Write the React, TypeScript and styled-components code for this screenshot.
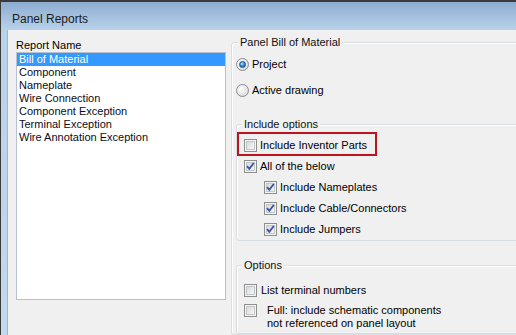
import styled, { createGlobalStyle } from 'styled-components'

const GlobalStyle = createGlobalStyle`
  html, body {
    margin: 0;
    padding: 0;
    width: 516px;
    height: 335px;
    overflow: hidden;
    background: #f0f0f0;
  }
  body {
    font-family: "Liberation Sans", Arial, sans-serif;
    font-size: 11px;
    color: #000;
  }
`

const Window = styled.div`
  width: 516px;
  height: 335px;
  box-sizing: border-box;
  display: flex;
  flex-direction: column;
  border-top: 2px solid #3a3a3a;
  border-left: 1px solid #3a3a3a;
  background: linear-gradient(to bottom, #8dadd0 0px, #b8d2ea 28px, #c2d9ef 100%);
  overflow: hidden;
`

const TitleBar = styled.div`
  height: 28px;
  box-sizing: border-box;
  padding: 6px 0 0 11px;
  display: flex;
  align-items: center;
  font-size: 12px;
  color: #1b1b1b;
`

const Client = styled.div`
  flex: 1;
  display: flex;
  margin-left: 6px;
  border-left: 1px solid #9fb6cf;
  background: #f0f0f0;
  overflow: hidden;
`

const LeftColumn = styled.div`
  display: flex;
  flex-direction: column;
  padding: 9px 0 0 8px;
`

const Label = styled.div`
  line-height: 13px;
  height: 13px;
`

const ListBox = styled.ul`
  width: 210px;
  height: 248px;
  box-sizing: border-box;
  margin: 0;
  padding: 0;
  list-style: none;
  background: #fff;
  border: 1px solid #b8c2ce;
`

const ListItem = styled.li<{ $selected?: boolean }>`
  height: 13px;
  line-height: 13px;
  padding-left: 2px;
  white-space: nowrap;
  background: ${p => (p.$selected ? '#3399ff' : 'transparent')};
  color: ${p => (p.$selected ? '#fff' : '#0c0c20')};
`

const RightColumn = styled.div`
  margin: 6px 0 0 5px;
`

const GroupBox = styled.fieldset<{ $top?: number; $width?: number }>`
  margin: ${p => p.$top ?? 0}px 0 0 0;
  padding: 0;
  width: ${p => (p.$width ? `${p.$width}px` : 'auto')};
  min-width: 0;
  border: 1px solid #d5dfe5;
  border-radius: 3px;
  box-shadow: inset 1px 1px 0 #fff;
`

const Legend = styled.legend<{ $offset: number }>`
  margin-left: ${p => p.$offset}px;
  padding: 0 2px;
  line-height: 13px;
  background: #f0f0f0;
  color: #111;
`

const OuterBody = styled.div`
  display: flex;
  flex-direction: column;
  padding: 9px 0 0 4px;
`

const RadioRow = styled.label`
  display: flex;
  align-items: center;
  gap: 3px;
  height: 13px;
  line-height: 13px;
  & + & {
    margin-top: 13px;
  }
`

const Radio = styled.span<{ $checked?: boolean }>`
  position: relative;
  width: 13px;
  height: 13px;
  box-sizing: border-box;
  border-radius: 50%;
  border: 1px solid #8a8c8e;
  background: radial-gradient(circle at 35% 35%, #fdfdfd 0%, #e6e6e6 55%, #cfcfcf 100%);
  flex-shrink: 0;
  &::after {
    content: '';
    display: ${p => (p.$checked ? 'block' : 'none')};
    position: absolute;
    left: 2px;
    top: 2px;
    width: 7px;
    height: 7px;
    box-sizing: border-box;
    border-radius: 50%;
    border: 1px solid #1b4f86;
    background: radial-gradient(circle at 40% 35%, #bde8ff 0%, #3b93d6 45%, #0f4f94 100%);
  }
`

const GroupBody = styled.div<{ $top: number; $bottom: number }>`
  display: flex;
  flex-direction: column;
  padding: ${p => p.$top}px 0 ${p => p.$bottom}px 0;
`

const Highlight = styled.div`
  width: 140px;
  height: 24px;
  box-sizing: border-box;
  border: 2px solid #c0141c;
  display: flex;
  align-items: center;
  padding: 3px 0 0 5px;
`

const CheckRow = styled.label<{ $indent: number; $top: number; $gap?: number }>`
  display: flex;
  align-items: flex-start;
  gap: ${p => p.$gap ?? 3}px;
  margin-top: ${p => p.$top}px;
  padding-left: ${p => p.$indent}px;
  line-height: 13px;
  white-space: nowrap;
`

const Box = styled.span`
  position: relative;
  width: 13px;
  height: 13px;
  box-sizing: border-box;
  border: 1px solid #8e8f8f;
  background: linear-gradient(135deg, #cfd0d2 0%, #eceded 60%, #f8f8f8 100%);
  box-shadow: inset 0 0 0 1px #f4f4f4, inset 0 0 0 2px #c3c6ca;
  flex-shrink: 0;
  svg {
    position: absolute;
    left: 0;
    top: 0;
  }
`

const CheckText = styled.span`
  display: flex;
  flex-direction: column;
`

const Check = ({ checked }: { checked?: boolean }) => (
  <Box>
    {checked && (
      <svg width="11" height="11" viewBox="0 0 11 11">
        <path d="M2 5.2 L4.3 7.8 L8.8 2" fill="none" stroke="#3b57a3" strokeWidth="1.9" />
      </svg>
    )}
  </Box>
)

const REPORTS = [
  'Bill of Material',
  'Component',
  'Nameplate',
  'Wire Connection',
  'Component Exception',
  'Terminal Exception',
  'Wire Annotation Exception',
]

const INCLUDE_SUB = ['Include Nameplates', 'Include Cable/Connectors', 'Include Jumpers']

const App = () => (
  <>
    <GlobalStyle />
    <Window>
      <TitleBar>Panel Reports</TitleBar>
      <Client>
        <LeftColumn>
          <Label>Report Name</Label>
          <ListBox>
            {REPORTS.map((el, i) => (
              <ListItem key={el} $selected={i === 0}>
                {el}
              </ListItem>
            ))}
          </ListBox>
        </LeftColumn>
        <RightColumn>
          <GroupBox $width={300}>
            <Legend $offset={6}>Panel Bill of Material</Legend>
            <OuterBody>
              <RadioRow>
                <Radio $checked />
                Project
              </RadioRow>
              <RadioRow>
                <Radio />
                Active drawing
              </RadioRow>

              <GroupBox $top={21}>
                <Legend $offset={5}>Include options</Legend>
                <GroupBody $top={1} $bottom={4}>
                  <Highlight>
                    <CheckRow $indent={0} $top={0}>
                      <Check />
                      Include Inventor Parts
                    </CheckRow>
                  </Highlight>
                  <CheckRow $indent={7} $top={4}>
                    <Check checked />
                    All of the below
                  </CheckRow>
                  {INCLUDE_SUB.map(el => (
                    <CheckRow key={el} $indent={27} $top={8}>
                      <Check checked />
                      {el}
                    </CheckRow>
                  ))}
                </GroupBody>
              </GroupBox>

              <GroupBox $top={18}>
                <Legend $offset={5}>Options</Legend>
                <GroupBody $top={12} $bottom={3}>
                  <CheckRow $indent={7} $top={0} $gap={4}>
                    <Check />
                    List terminal numbers
                  </CheckRow>
                  <CheckRow $indent={7} $top={7} $gap={10}>
                    <Check />
                    <CheckText>
                      <span>Full: include schematic components</span>
                      <span>not referenced on panel layout</span>
                    </CheckText>
                  </CheckRow>
                </GroupBody>
              </GroupBox>
            </OuterBody>
          </GroupBox>
        </RightColumn>
      </Client>
    </Window>
  </>
)

export default App
